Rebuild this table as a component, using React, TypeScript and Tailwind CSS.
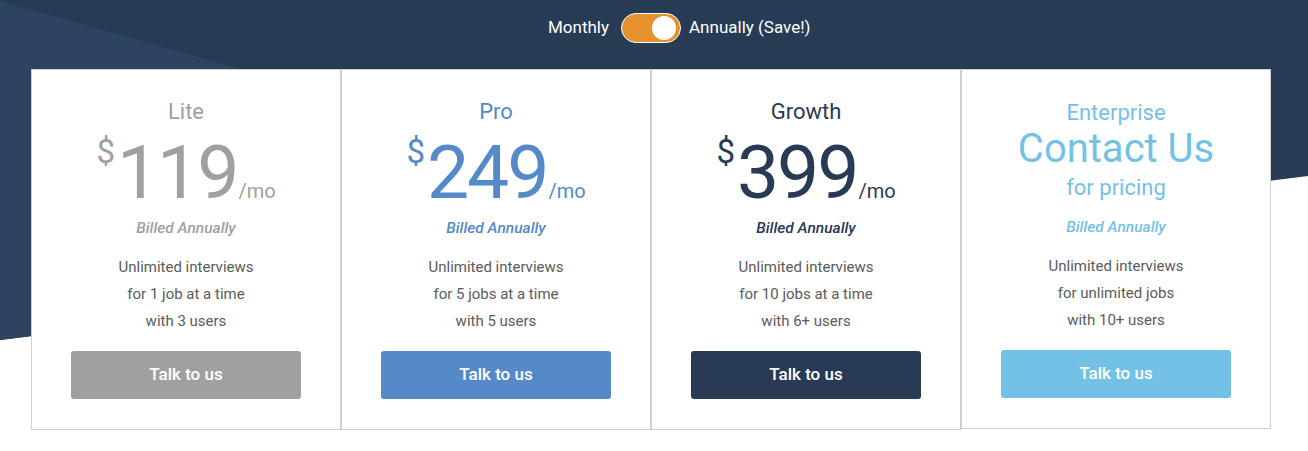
import React from "react";

type Plan = {
  name: string;
  price?: string;
  color: string;
  lines: string[];
};

const plans: Plan[] = [
  { name: "Lite", price: "119", color: "#a0a0a0", lines: ["Unlimited interviews", "for 1 job at a time", "with 3 users"] },
  { name: "Pro", price: "249", color: "#5589c8", lines: ["Unlimited interviews", "for 5 jobs at a time", "with 5 users"] },
  { name: "Growth", price: "399", color: "#283a54", lines: ["Unlimited interviews", "for 10 jobs at a time", "with 6+ users"] },
];

function PriceCard({ plan }: { plan: Plan }) {
  return (
    <div className="w-[310px] h-[361px] border border-[#cfcfcf] bg-white flex flex-col items-center pt-[27px]">
      <div className="text-[22px] leading-[30px]" style={{ color: plan.color }}>
        {plan.name}
      </div>
      <div className="mt-[7px] flex items-baseline" style={{ color: plan.color }}>
        <span className="self-start text-[33px] leading-none mt-[1px] mr-[2px]">$</span>
        <span className="text-[75px] leading-[76px] tracking-[-2px]">{plan.price}</span>
        <span className="text-[20px] leading-none ml-[1px]">/mo</span>
      </div>
      <div className="mt-[8px] text-[15.5px] leading-[20px] italic font-medium" style={{ color: plan.color }}>
        Billed Annually
      </div>
      <div className="mt-[16px] text-[15px] leading-[27px] text-[#5b5b5b] text-center">
        {plan.lines.map((l) => (
          <div key={l}>{l}</div>
        ))}
      </div>
      <button
        className="mt-[16px] w-[230px] h-[48px] rounded-[3px] text-white text-[17px] font-medium"
        style={{ backgroundColor: plan.color }}
      >
        Talk to us
      </button>
    </div>
  );
}

function EnterpriseCard() {
  const c = "#74c1e6";
  return (
    <div className="w-[310px] h-[360px] border border-[#cfcfcf] bg-white flex flex-col items-center pt-[28px]">
      <div className="text-[22px] leading-[30px] text-[#74c1e6]">Enterprise</div>
      <div className="mt-[1px] text-[40px] leading-[40px] text-[#74c1e6]">Contact Us</div>
      <div className="mt-[4px] text-[22px] leading-[30px] text-[#74c1e6]">for pricing</div>
      <div className="mt-[14px] text-[15.5px] leading-[20px] italic font-medium text-[#74c1e6]">Billed Annually</div>
      <div className="mt-[16px] text-[15px] leading-[27px] text-[#5b5b5b] text-center">
        <div>Unlimited interviews</div>
        <div>for unlimited jobs</div>
        <div>with 10+ users</div>
      </div>
      <button
        className="mt-[16px] w-[230px] h-[48px] rounded-[3px] text-white text-[17px] font-medium"
        style={{ backgroundColor: c }}
      >
        Talk to us
      </button>
    </div>
  );
}

export default function App() {
  return (
    <div
      className="relative w-[1308px] h-[451px] bg-white overflow-hidden"
      style={{ fontFamily: "Roboto, 'Liberation Sans', sans-serif" }}
    >
      <svg className="absolute inset-0" width="1308" height="451" viewBox="0 0 1308 451">
        <polygon points="0,0 1308,0 1308,176 0,340" fill="#283b54" />
        <polygon points="0,1 836,237 0,340" fill="#2d4460" />
      </svg>
      <div className="relative flex flex-col">
        <div className="h-[69px] flex items-center pl-[548px] pb-[14px] text-white text-[17px]">
          <span>Monthly</span>
          <div className="ml-[12px] w-[60px] h-[30px] rounded-full bg-[#e5922e] border border-white flex items-center justify-end pr-[4px]">
            <div className="w-[24px] h-[24px] rounded-full bg-white" />
          </div>
          <span className="ml-[8px]">Annually (Save!)</span>
        </div>
        <div className="flex items-start ml-[31px]">
          {plans.map((p) => (
            <PriceCard key={p.name} plan={p} />
          ))}
          <EnterpriseCard />
        </div>
      </div>
    </div>
  );
}
